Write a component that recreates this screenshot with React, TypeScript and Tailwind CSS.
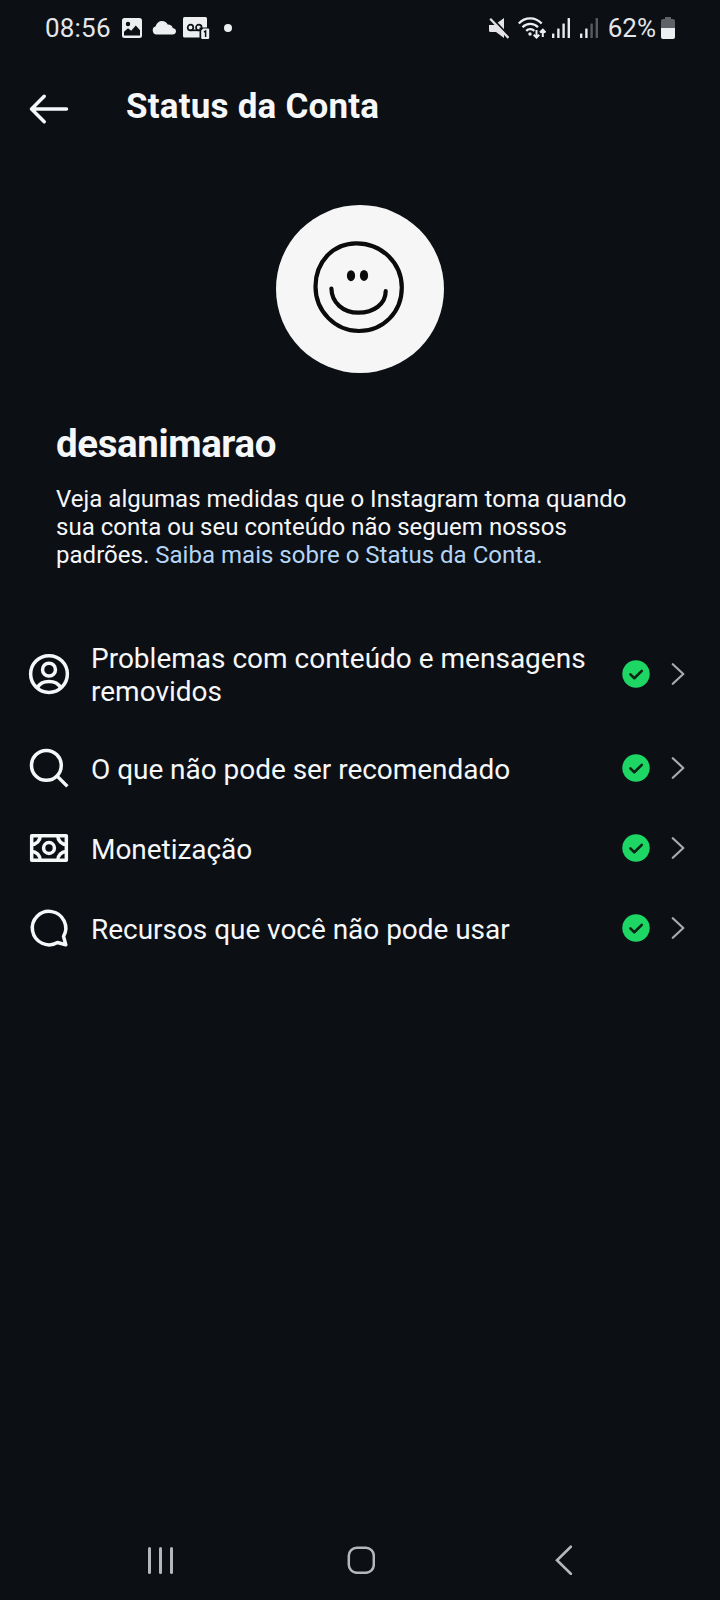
import React from "react";

type IconProps = {
  children: React.ReactNode;
};

type StatusItem = {
  id: string;
  label: string;
  icon: React.ReactNode;
  tall?: boolean;
};

// 24px grid scaled to the 42px icons used across the screen
function Icon({ children }: IconProps) {
  return (
    <svg
      className="size-[42px] shrink-0"
      viewBox="0 0 24 24"
      fill="none"
      stroke="currentColor"
      strokeWidth="2"
      strokeLinecap="round"
      strokeLinejoin="round"
    >
      {children}
    </svg>
  );
}

const items: StatusItem[] = [
  {
    id: "content",
    label: "Problemas com conteúdo e mensagens removidos",
    tall: true,
    icon: (
      <Icon>
        <circle cx="12" cy="12" r="10.5" />
        <circle cx="12" cy="9.5" r="3.7" />
        <path d="M5.4 19.8c1.1-2.2 3.6-3.5 6.6-3.5s5.5 1.3 6.6 3.5" />
      </Icon>
    ),
  },
  {
    id: "recommended",
    label: "O que não pode ser recomendado",
    icon: (
      <Icon>
        <circle cx="10.5" cy="10.5" r="8.5" />
        <path strokeLinecap="butt" d="M16.5 16.5 22.5 22.5" />
      </Icon>
    ),
  },
  {
    id: "monetization",
    label: "Monetização",
    icon: (
      <Icon>
        <path strokeLinecap="butt" d="M2.1 5h19.8v14H2.1z" />
        <circle cx="12" cy="12" r="3.1" />
        <path
          strokeLinecap="butt"
          d="M7 5a5 5 0 0 1-5 5M17 5a5 5 0 0 0 5 5M7 19a5 5 0 0 0-5-5M17 19a5 5 0 0 1 5-5"
        />
      </Icon>
    ),
  },
  {
    id: "features",
    label: "Recursos que você não pode usar",
    icon: (
      <Icon>
        <path d="M20.3 16.800a9.550 9.550 0 1 0-3.450 3.480L21.600 21.600Z" />
      </Icon>
    ),
  },
];

function SignalBars({ active }: { active: number }) {
  return (
    <svg className="h-5 w-[18px]" viewBox="0 0 18 20" fill="#e9ebed">
      <rect x="0" y="15.5" width="2.4" height="4.5" rx="0.5" />
      <rect x="5.2" y="10.5" width="2.4" height="9.5" rx="0.5" />
      <rect x="10.4" y="5.5" width="2.4" height="14.5" rx="0.5" opacity={active > 2 ? 1 : 0.35} />
      <rect x="15.6" y="0" width="2.4" height="20" rx="0.5" opacity={active > 3 ? 1 : 0.35} />
    </svg>
  );
}

function StatusBar() {
  return (
    <div className="flex h-14 items-center justify-between pr-[45px] pl-[45px] text-[26px] leading-none text-[#e3e6ea]">
      <div className="flex items-center">
        <span className="w-[77px] tracking-[0.2px]">08:56</span>
        <svg className="size-5" viewBox="0 0 20 20">
          <rect width="20" height="20" rx="2.5" fill="#eceef0" />
          <circle cx="6" cy="6" r="2.2" fill="#0c0f14" />
          <path d="M2 17.5v-3.800l4-3.500 3.200 2.600 4.600-5.200L18 12.200v5.300z" fill="#0c0f14" />
        </svg>
        <svg className="ml-2.5 h-3.5 w-6" viewBox="0 0 24 14" fill="#eceef0">
          <path d="M4.500 13.500a4.200 4.200 0 0 1-.8-8.200C4.500 2 7 0 10 0c2.700 0 4.600 1.300 5.700 3.500 3 0 4.600 1.500 5 3.500 2 .3 3.300 1.500 3.300 3.200 0 2-1.400 3.300-3.500 3.300z" />
        </svg>
        <svg className="ml-[7px] h-[22px] w-[27px]" viewBox="0 0 27 22">
          <rect width="24" height="20.5" rx="1.5" fill="#eceef0" />
          <g fill="none" stroke="#0c0f14" strokeWidth="1.7">
            <circle cx="7.5" cy="10.5" r="2.8" />
            <circle cx="15.8" cy="10.5" r="2.8" />
            <path d="M7.500 13.300h8.300" />
          </g>
          <rect x="16.5" y="10.5" width="11" height="12" fill="#0c0f14" />
          <path d="M18.200 13.600l2-2H25a1.200 1.200 0 0 1 1.200 1.200v8a1.200 1.200 0 0 1-1.200 1.200h-5.600a1.200 1.200 0 0 1-1.200-1.200z" fill="#eceef0" />
          <path d="M21 15l1.600-1v6" fill="none" stroke="#0c0f14" strokeWidth="1.5" />
        </svg>
        <span className="ml-3.5 size-2 rounded-full bg-[#eceef0]" />
      </div>
      <div className="flex items-center">
        <svg className="h-[21px] w-5" viewBox="0 0 20 21">
          <path d="M0 7h5.500L15 0v20l-8-6H1.500A1.500 1.500 0 0 1 0 12.500z" fill="#e6e3e8" />
          <path d="M2.500-.5 20.500 18.500" stroke="#0c0f14" strokeWidth="2" />
          <path d="M1.200.8 19.500 20" stroke="#e6e3e8" strokeWidth="2.3" />
        </svg>
        <svg className="ml-[9px] h-[22px] w-7" viewBox="0 0 28 22" fill="none" stroke="#eceef0" strokeWidth="2.3">
          <path d="M.8 6.500C7-.4 17.500-.4 23.700 6.500" />
          <path d="M4.500 10.300c4.200-4.500 11.300-4.500 15.500 0" />
          <path d="M8.200 13.900c2.300-2.400 5.800-2.400 8.100 0" />
          <circle cx="12" cy="17" r="1.7" fill="#eceef0" stroke="none" />
          <path strokeWidth="2" d="M18.500 13v7.500M15.700 17.800l2.800 2.800 2.800-2.800M24.800 20v-7.500M22 15.500l2.800-2.800 2.800 2.800" />
        </svg>
        <div className="ml-1.5 flex gap-2.5">
          <SignalBars active={4} />
          <SignalBars active={2} />
        </div>
        <span className="ml-2.5">62%</span>
        <svg className="ml-[5px] h-[22px] w-3.5" viewBox="0 0 14 22">
          <path d="M4 0h6v2h2a2 2 0 0 1 2 2v8H0V4a2 2 0 0 1 2-2h2z" fill="#5f6266" />
          <path d="M0 11h14v9a2 2 0 0 1-2 2H2a2 2 0 0 1-2-2z" fill="#eceef0" />
        </svg>
      </div>
    </div>
  );
}

function Avatar() {
  return (
    <div className="size-[168px] self-center overflow-hidden rounded-full bg-[#f6f6f6]">
      <svg viewBox="0 0 168 168" fill="none" stroke="#0b0b0b" strokeWidth="4.2" strokeLinecap="round">
        <path d="M80 38.300C57 38.500 39.500 57 39.500 81.500c0 25 20 44.500 43.500 44.500 24 0 42.800-18.500 42.800-43.500C125.800 58.500 106 38 80 38.300Z" />
        <path d="M55.400 83.500c.3 14 11.500 24.200 26.900 24.200 15.500 0 27.300-8.700 27.400-21.500" />
        <ellipse cx="75" cy="70.7" rx="4.1" ry="5.5" fill="#0b0b0b" stroke="none" />
        <ellipse cx="88" cy="70.4" rx="4.1" ry="5.5" fill="#0b0b0b" stroke="none" />
      </svg>
    </div>
  );
}

function StatusRow({ item }: { item: StatusItem }) {
  return (
    <li className={item.tall ? "flex h-[108px] items-center" : "flex h-20 items-center"}>
      {item.icon}
      <span
        className={
          item.tall ? "ml-[21px] w-[519px] pt-0.5" : "ml-[21px] w-[519px] pt-[3px] tracking-[-0.04px]"
        }
      >
        {item.label}
      </span>
      <svg className="ml-3 size-7" viewBox="0 0 28 28" fill="none">
        <circle cx="14" cy="14" r="13.7" fill="#1dd663" />
        <path d="M8.400 14.400 12.300 18.200 19.800 10.900" stroke="#0b2413" strokeWidth="2.6" strokeLinecap="round" strokeLinejoin="round" />
      </svg>
      <svg
        className="ml-[21px] h-[22px] w-3.5"
        viewBox="0 0 14 22"
        fill="none"
        stroke="#a9abae"
        strokeWidth="2.2"
        strokeLinecap="round"
        strokeLinejoin="round"
      >
        <path d="M1.800 1.200 12.300 11 1.800 20.800" />
      </svg>
    </li>
  );
}

function NavBar() {
  return (
    <div className="mt-auto flex h-20 items-center pl-[147px] text-[#b4b7bb]">
      <div className="flex h-[27px] w-[27px] justify-between px-px">
        <span className="w-[3px] rounded-full bg-current" />
        <span className="w-[3px] rounded-full bg-current" />
        <span className="w-[3px] rounded-full bg-current" />
      </div>
      <svg className="ml-[173px] size-7" viewBox="0 0 28 28" fill="none" stroke="currentColor" strokeWidth="2.5">
        <rect x="1.8" y="1.8" width="25" height="25" rx="8" />
      </svg>
      <svg className="ml-[180px] h-[30px] w-[18px]" viewBox="0 0 18 30" fill="none" stroke="currentColor" strokeWidth="2.6" strokeLinecap="round">
        <path d="M15.800 1.700 2 15.300l13.800 13.500" />
      </svg>
    </div>
  );
}

export default function App() {
  return (
    <div className="flex h-[1600px] w-[720px] flex-col bg-[#0c0f14] font-[Roboto,sans-serif] text-[#f5f7f9]">
      <StatusBar />
      <header className="flex h-[98px] items-center px-7 pt-2">
        <Icon>
          <path d="M2.900 12H22M9.276 4.726 2 12l7.276 7.274" />
        </Icon>
        <h1 className="ml-14 pb-1.5 text-[35px] leading-[41px] font-bold tracking-[0.2px]">Status da Conta</h1>
      </header>
      <main className="flex flex-col pt-[51px]">
        <Avatar />
        <section className="px-14 pt-12">
          <h2 className="text-[38.5px] leading-[45px] font-bold tracking-[-0.4px]">desanimarao</h2>
          <p className="mt-[19px] w-[590px] text-[24px] leading-7 tracking-[0.02px]">
            Veja algumas medidas que o Instagram toma quando sua conta ou seu conteúdo não seguem nossos padrões.{" "}
            <a className="text-[#b4d5f5]">Saiba mais sobre o Status da Conta.</a>
          </p>
        </section>
        <ul className="mt-[51px] pl-7 text-[28px] leading-[33px]">
          {items.map((item) => (
            <StatusRow key={item.id} item={item} />
          ))}
        </ul>
      </main>
      <NavBar />
    </div>
  );
}
